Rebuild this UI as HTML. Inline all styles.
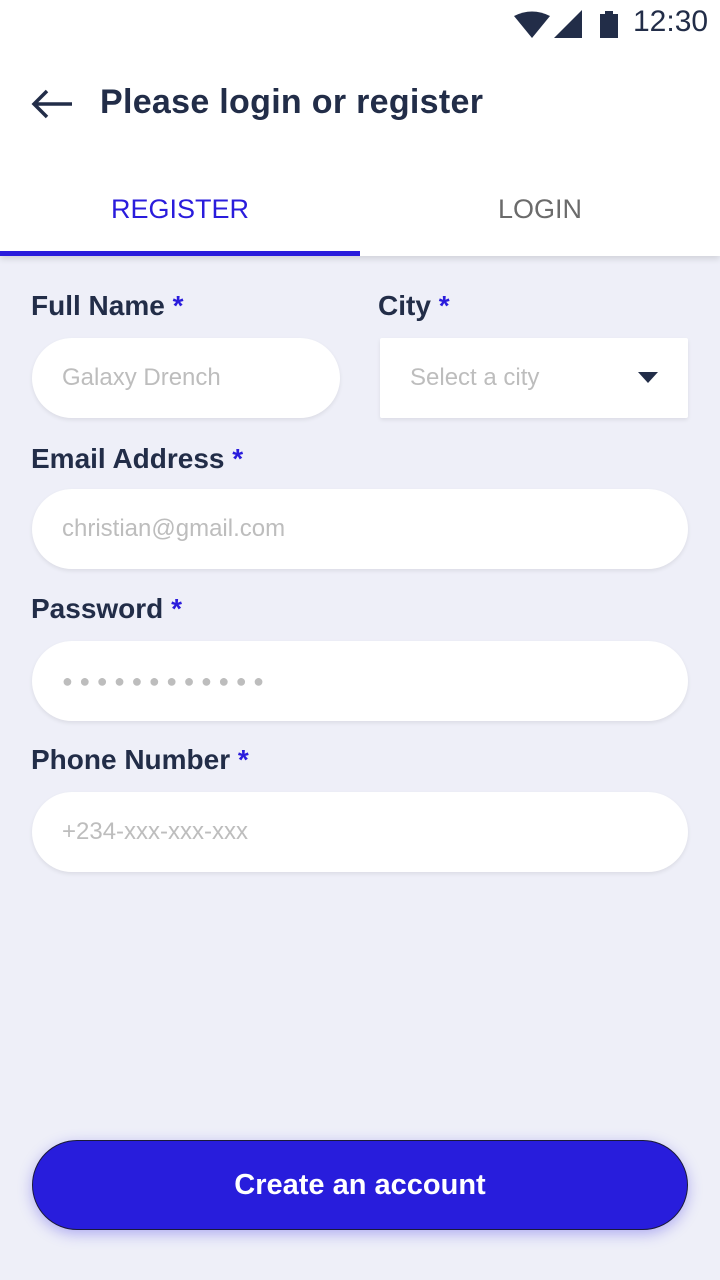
<!DOCTYPE html>
<html><head><meta charset="utf-8"><style>
*{margin:0;padding:0;box-sizing:border-box}
body{width:720px;height:1280px;background:#eeeff8;font-family:"Liberation Sans",sans-serif;position:relative;overflow:hidden;color:#222d48}
.top{position:absolute;left:0;top:0;width:720px;height:256px;background:#fff;box-shadow:0 3px 6px rgba(0,0,0,.12)}
.abs{position:absolute}
.lbl{position:absolute;font-size:28px;font-weight:bold;color:#222d48}
.lbl span{color:#2a1cdc}
.inp{position:absolute;background:#fff;border-radius:40px;height:80px;box-shadow:0 2px 4px rgba(0,0,0,.08);font-size:24px;color:#bdbdbd;padding-left:30px;line-height:80px}
</style></head><body>
<div class="top">
 <svg class="abs" style="left:514px;top:10px" width="110" height="30" viewBox="0 0 110 30">
  <path d="M0 6 Q18 -3 36 6 L18 28 Z" fill="#222d48"/>
  <path d="M40 28 L68 0 L68 28 Z" fill="#222d48"/>
  <rect x="86" y="4" width="18" height="24" fill="#222d48"/><rect x="91" y="1" width="8" height="4" fill="#222d48"/>
 </svg>
 <div class="abs" style="left:633px;top:5px;font-size:30px;color:#222d48">12:30</div>
 <svg class="abs" style="left:30px;top:88px" width="44" height="32" viewBox="0 0 44 32"><path d="M42 16H4M17 3L4 16l13 13" stroke="#222d48" stroke-width="3.5" fill="none"/></svg>
 <div class="abs" style="left:100px;top:83px;font-size:34px;font-weight:bold;letter-spacing:0.3px">Please login or register</div>
 <div class="abs" style="left:0;width:360px;top:194px;text-align:center;font-size:27px;color:#2a1cdc">REGISTER</div>
 <div class="abs" style="left:360px;width:360px;top:194px;text-align:center;font-size:27px;color:#6b6b6b">LOGIN</div>
 <div class="abs" style="left:0;top:251px;width:360px;height:5px;background:#2a1cdc"></div>
</div>
<div class="lbl" style="left:31px;top:290px">Full Name <span>*</span></div>
<div class="lbl" style="left:378px;top:290px">City <span>*</span></div>
<div class="inp" style="left:32px;top:338px;width:308px">Galaxy Drench</div>
<div class="inp" style="left:380px;top:338px;width:308px;border-radius:2px">Select a city
 <svg class="abs" style="left:258px;top:34px" width="20" height="12"><path d="M0 0H20L10 11Z" fill="#222d48"/></svg></div>
<div class="lbl" style="left:31px;top:443px">Email Address <span>*</span></div>
<div class="inp" style="left:32px;top:489px;width:656px">christian@gmail.com</div>
<div class="lbl" style="left:31px;top:593px">Password <span>*</span></div>
<div class="inp" style="left:32px;top:641px;width:656px;letter-spacing:6.5px;font-size:18px">●●●●●●●●●●●●</div>
<div class="lbl" style="left:31px;top:744px">Phone Number <span>*</span></div>
<div class="inp" style="left:32px;top:792px;width:656px">+234-xxx-xxx-xxx</div>
<div class="abs" style="left:32px;top:1140px;width:656px;height:90px;border-radius:45px;background:#281ddc;border:1px solid #1a1a3a;box-shadow:0 4px 14px rgba(60,50,230,.35);color:#fff;font-size:29px;font-weight:bold;text-align:center;line-height:88px">Create an account</div>
</body></html>
